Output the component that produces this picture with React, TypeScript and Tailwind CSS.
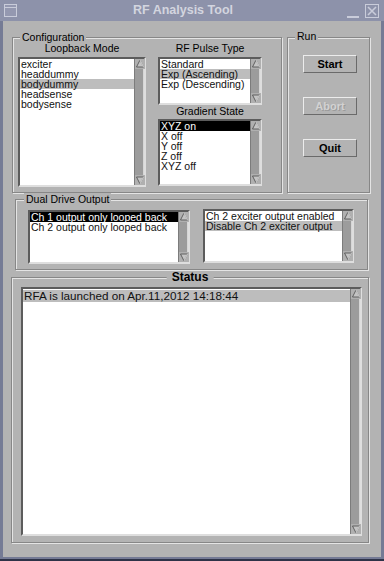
import clsx from "clsx";
import type { ReactNode } from "react";

type Sel = "dark" | "light" | undefined;

function Arrow({ down }: { down?: boolean }) {
  return (
    <svg width="10" height="10" viewBox="0 0 10 10" className="block">
      <rect x="0" y="0" width="10" height="10" fill="#b0b0b0" />
      <polygon
        points={down ? "1.5,2 8.5,2 5,9" : "5,1 8.5,8 1.5,8"}
        fill="#c4c4c4"
        stroke="#4a4a4a"
        strokeWidth="0.8"
      />
      <line
        x1={down ? 5 : 5}
        y1={down ? 9 : 1}
        x2={down ? 8.5 : 8.5}
        y2={down ? 2 : 8}
        stroke="#f0f0f0"
        strokeWidth="0.8"
      />
    </svg>
  );
}

function Scrollbar() {
  return (
    <div className="flex w-[10px] shrink-0 flex-col justify-between border-l border-[#7c7c7c] bg-[#9c9c9c] shadow-[inset_-1px_0_0_#d6d6d6]">
      <Arrow />
      <Arrow down />
    </div>
  );
}

function ListBox({
  items,
  className,
  big,
}: {
  items: [string, Sel][];
  className: string;
  big?: boolean;
}) {
  return (
    <div
      className={clsx(
        "flex shrink-0 border-2 border-t-[#5c5c5c] border-l-[#5c5c5c] border-b-[#dedede] border-r-[#dedede] bg-white",
        className
      )}
    >
      <div className={clsx("min-w-0 flex-1 overflow-hidden", big ? "pt-[1px]" : "pt-0")}>
        {items.map(([t, sel]) => (
          <div
            key={t}
            className={clsx(
              "whitespace-nowrap pl-[1px] text-[#111]",
              big ? "h-[12px] text-[11.7px] leading-[12px]" : "h-[10px] text-[10.5px] leading-[10px]",
              sel === "dark" && "bg-black text-white",
              sel === "light" && "bg-[#bdbdbd]"
            )}
          >
            {t}
          </div>
        ))}
      </div>
      <Scrollbar />
    </div>
  );
}

function Group({
  label,
  labelClass,
  className,
  children,
}: {
  label: string;
  labelClass: string;
  className: string;
  children: ReactNode;
}) {
  return (
    <div
      className={clsx(
        "relative shrink-0 border border-[#878787] shadow-[inset_1px_1px_0_#e4e4e4,1px_1px_0_#e4e4e4]",
        className
      )}
    >
      <div className={clsx("absolute bg-[#b3b3b3] px-[2px] leading-[12px]", labelClass)}>{label}</div>
      {children}
    </div>
  );
}

function RunButton({ label, disabled }: { label: string; disabled?: boolean }) {
  return (
    <div
      className={clsx(
        "flex h-[18px] w-[54px] items-center justify-center border border-t-[#ececec] border-l-[#ececec] border-b-[#6a6a6a] border-r-[#6a6a6a] text-[11px] font-bold",
        disabled ? "text-[#d2d2d2] [text-shadow:1px_1px_0_#9a9a9a]" : "text-black"
      )}
    >
      {label}
    </div>
  );
}

export default function App() {
  return (
    <div className="flex h-[561px] w-[384px] flex-col border-b-[2px] border-[#2e3348] bg-[#757b95] font-['Liberation_Sans',Arial,sans-serif] text-black">
      {/* title bar */}
      <div className="flex h-[21px] shrink-0 items-center bg-[#8d92aa]">
        <div className="flex w-[21px] justify-center">
          <svg width="13" height="13" viewBox="0 0 13 13">
            <rect x="0.5" y="0.5" width="12" height="12" fill="#9498b0" stroke="#c9ccda" />
            <line x1="1" y1="3.5" x2="12" y2="3.5" stroke="#c9ccda" />
          </svg>
        </div>
        <div className="flex-1 text-center text-[12.5px] font-bold text-[#d3d5df]">RF Analysis Tool</div>
        <div className="flex w-[39px] items-center gap-[6px] pl-[2px]">
          <div className="mt-[12px] h-[2px] w-[12px] bg-[#c9ccda]" />
          <svg width="14" height="14" viewBox="0 0 14 14">
            <rect x="0.5" y="0.5" width="13" height="13" fill="none" stroke="#c9ccda" />
            <path d="M3 3 L11 11 M11 3 L3 11" stroke="#c9ccda" strokeWidth="1.6" />
          </svg>
        </div>
      </div>

      {/* body */}
      <div className="mx-[3px] mb-[2px] flex flex-1 flex-col bg-[#b3b3b3] text-[10.5px]">
        {/* row 1 */}
        <div className="ml-[9px] mt-[16px] flex gap-[5px]">
          <Group label="Configuration" labelClass="-top-[7px] left-[7px]" className="h-[156px] w-[270px]">
            <div className="flex gap-[12px] pl-[5px] pt-[4px]">
              <div className="flex flex-col">
                <div className="h-[12px] text-center leading-[12px]">Loopback Mode</div>
                <ListBox
                  className="mt-[3px] h-[130px] w-[128px]"
                  items={[
                    ["exciter", undefined],
                    ["headdummy", undefined],
                    ["bodydummy", "light"],
                    ["headsense", undefined],
                    ["bodysense", undefined],
                  ]}
                />
              </div>
              <div className="flex flex-col">
                <div className="h-[12px] text-center leading-[12px]">RF Pulse Type</div>
                <ListBox
                  className="mt-[3px] h-[48px] w-[104px]"
                  items={[
                    ["Standard", undefined],
                    ["Exp (Ascending)", "light"],
                    ["Exp (Descending)", undefined],
                  ]}
                />
                <div className="h-[12px] text-center leading-[12px]">Gradient State</div>
                <ListBox
                  className="mt-[2px] h-[67px] w-[104px]"
                  items={[
                    ["XYZ on", "dark"],
                    ["X off", undefined],
                    ["Y off", undefined],
                    ["Z off", undefined],
                    ["XYZ off", undefined],
                  ]}
                />
              </div>
            </div>
          </Group>

          <Group label="Run" labelClass="-top-[8px] left-[7px]" className="h-[156px] w-[83px]">
            <div className="flex flex-col gap-[24px] pl-[15px] pt-[17px]">
              <RunButton label="Start" />
              <RunButton label="Abort" disabled />
              <RunButton label="Quit" />
            </div>
          </Group>
        </div>

        {/* row 2 */}
        <Group label="Dual Drive Output" labelClass="-top-[7px] left-[8px]" className="ml-[12px] mt-[6px] h-[71px] w-[353px]">
          <div className="flex gap-[13px] pl-[12px] pt-[10px]">
            <ListBox
              className="h-[54px] w-[162px]"
              items={[
                ["Ch 1 output only looped back", "dark"],
                ["Ch 2 output only looped back", undefined],
              ]}
            />
            <ListBox
              className="-mt-[1px] h-[54px] w-[151px]"
              items={[
                ["Ch 2 exciter output enabled", undefined],
                ["Disable Ch 2 exciter output", "light"],
              ]}
            />
          </div>
        </Group>

        {/* row 3 */}
        <Group
          label="Status"
          labelClass="-top-[7px] left-1/2 -translate-x-1/2 px-[5px] text-[12px] font-bold"
          className="ml-[8px] mt-[7px] h-[266px] w-[358px]"
        >
          <div className="pl-[9px] pt-[9px]">
            <ListBox
              big
              className="h-[249px] w-[341px]"
              items={[["RFA is launched on Apr.11,2012 14:18:44", "light"]]}
            />
          </div>
        </Group>
      </div>
    </div>
  );
}
